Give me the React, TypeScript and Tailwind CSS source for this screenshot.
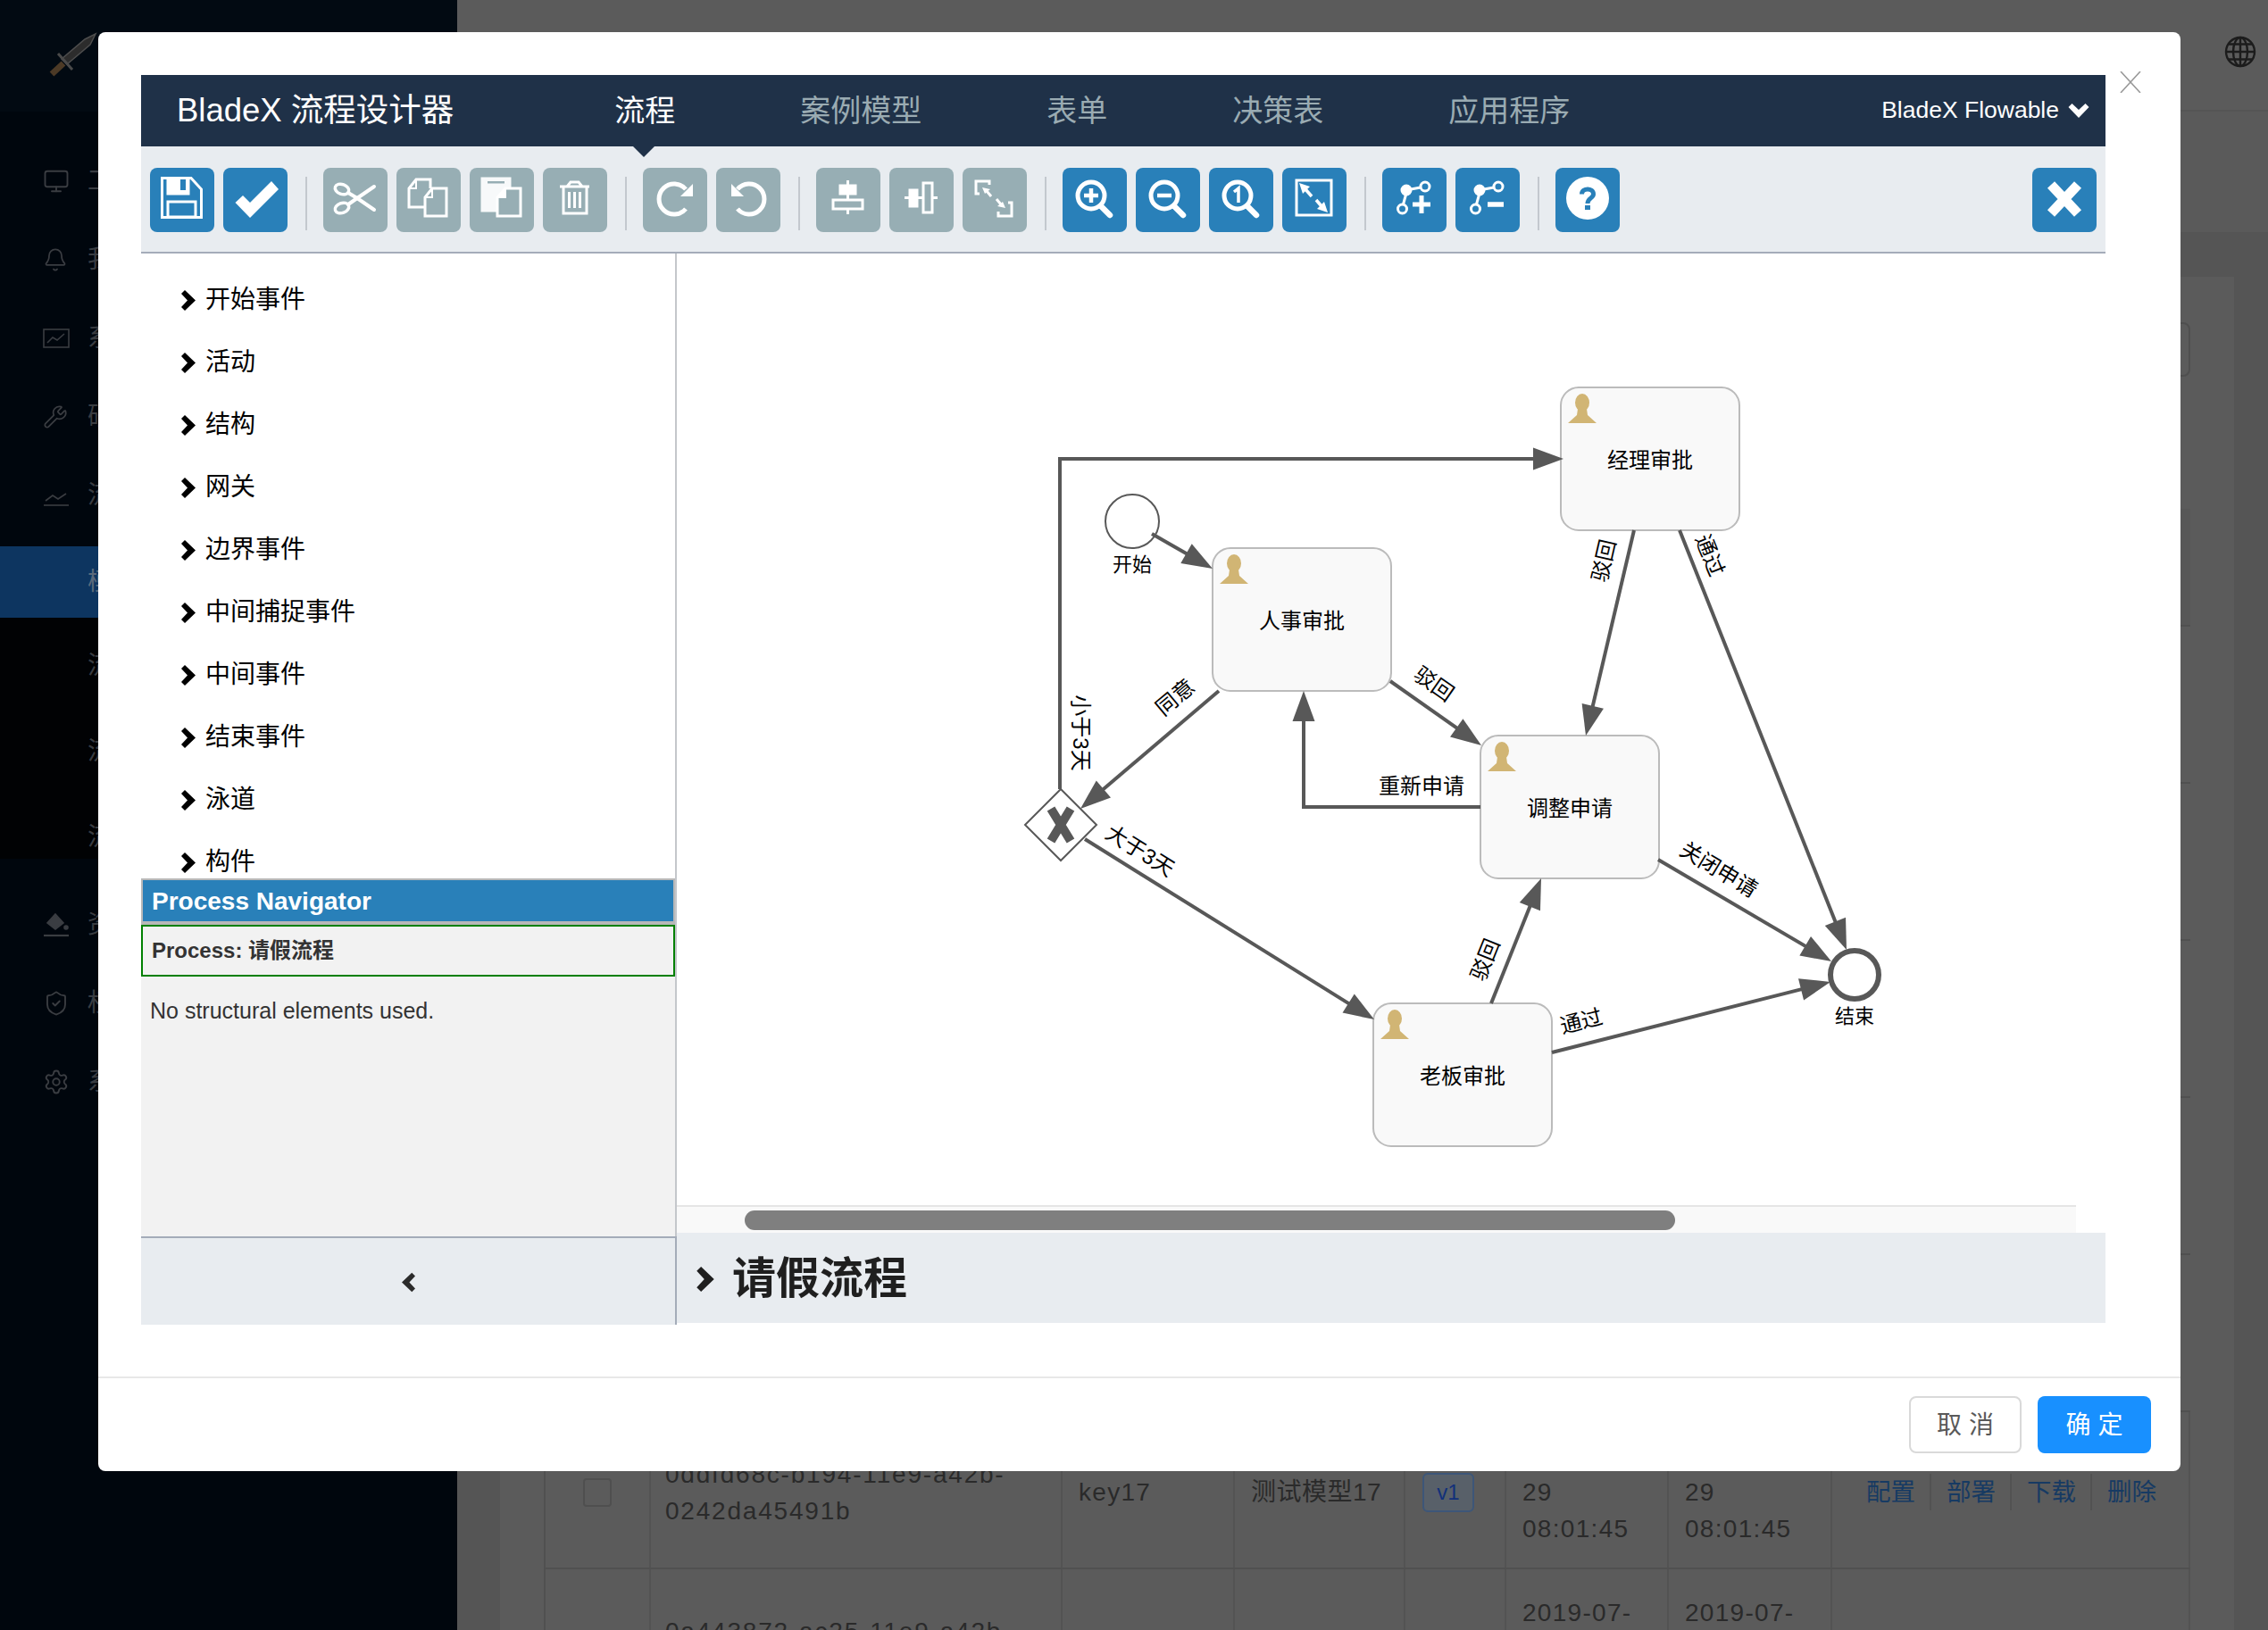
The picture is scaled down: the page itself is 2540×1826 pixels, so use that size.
import React from 'react';
import { Bell, Monitor, Settings, ShieldCheck, Wrench } from 'lucide-react';

const Chevron: React.FC<{ className?: string }> = ({ className }) => (
  <svg viewBox="0 0 16 23" className={className} fill="currentColor">
    <polygon points="0,4 4,0 16,11.5 4,23 0,19 7,11.5" />
  </svg>
);

const ToolBtn: React.FC<{ off?: boolean; children: React.ReactNode }> = ({ off, children }) => (
  <div className={`w-[72px] h-[72px] rounded-[8px] shrink-0 ${off ? 'bg-[#97aeb4]' : 'bg-[#2980b9]'}`}>
    <svg viewBox="0 0 72 72" className="w-full h-full" fill="none" stroke="#fff" strokeWidth="3">
      {children}
    </svg>
  </div>
);

const Sep = () => <div className="w-[2px] h-[60px] mt-[10px] ml-[20px] mr-[18px] bg-[#c3c8ce] shrink-0" />;

const Lens: React.FC<{ children?: React.ReactNode }> = ({ children }) => (
  <>
    <ellipse cx="32" cy="31" rx="15" ry="15" strokeWidth="5" />
    <line x1="43" y1="43" x2="53" y2="53" strokeWidth="6.5" strokeLinecap="round" />
    {children}
  </>
);

const BendBase = () => (
  <>
    <circle cx="48" cy="21" r="5" />
    <circle cx="27" cy="25" r="5" fill="#fff" />
    <circle cx="22.5" cy="46" r="5" />
    <line x1="32" y1="24" x2="43" y2="22" />
    <line x1="26.5" y1="30" x2="23.5" y2="41" />
  </>
);

const SideSvg: React.FC<{ children: React.ReactNode }> = ({ children }) => (
  <svg viewBox="0 0 30 30" width="30" height="30" fill="none" stroke="currentColor" strokeWidth="1.6">
    {children}
  </svg>
);

type Pt = [number, number];

const Edge: React.FC<{ pts: Pt[] }> = ({ pts }) => {
  const tip = pts[pts.length - 1];
  const from = pts[pts.length - 2];
  const dx = tip[0] - from[0];
  const dy = tip[1] - from[1];
  const len = Math.hypot(dx, dy);
  const ux = dx / len;
  const uy = dy / len;
  const bx = tip[0] - ux * 34;
  const by = tip[1] - uy * 34;
  const line = [...pts.slice(0, -1), [tip[0] - ux * 20, tip[1] - uy * 20]].map(p => p.join(',')).join(' ');
  const head = `${tip[0]},${tip[1]} ${bx - uy * 12.5},${by + ux * 12.5} ${bx + uy * 12.5},${by - ux * 12.5}`;
  return (
    <g>
      <polyline points={line} fill="none" stroke="#585858" strokeWidth="4" />
      <polygon points={head} fill="#585858" />
    </g>
  );
};

const Task: React.FC<{ x: number; y: number; label: string }> = ({ x, y, label }) => (
  <g>
    <rect x={x} y={y} width="200" height="160" rx="20" fill="#f9f9f9" stroke="#bbb" strokeWidth="2" />
    <ellipse cx={x + 24} cy={y + 17} rx="8" ry="10" fill="#d1b574" />
    <polygon points={`${x + 19},${y + 24} ${x + 29},${y + 24} ${x + 30},${y + 31} ${x + 40},${y + 40} ${x + 8},${y + 40} ${x + 18},${y + 31}`} fill="#d1b574" />
    <text x={x + 100} y={y + 81} textAnchor="middle" dominantBaseline="central" fontSize="24" fill="#000">{label}</text>
  </g>
);

const Label: React.FC<{ x: number; y: number; angle?: number; size?: number; children: React.ReactNode }> = ({ x, y, angle = 0, size = 24, children }) => (
  <text x={x} y={y} transform={`rotate(${angle} ${x} ${y})`} textAnchor="middle" dominantBaseline="central" fontSize={size} fill="#000">
    {children}
  </text>
);

const sideTop = [
  { icon: <Monitor size={30} strokeWidth={1.5} />, text: '工' },
  { icon: <Bell size={28} strokeWidth={1.5} />, text: '我' },
  {
    icon: (
      <SideSvg>
        <rect x="1" y="5" width="28" height="20" />
        <polyline points="5,20 11,14 16,17 24,10" />
      </SideSvg>
    ),
    text: '系',
  },
  { icon: <Wrench size={28} strokeWidth={1.5} />, text: '研' },
  {
    icon: (
      <SideSvg>
        <line x1="1" y1="26" x2="29" y2="26" />
        <polyline points="3,21 11,15 17,19 26,13" />
      </SideSvg>
    ),
    text: '流',
  },
];

const sideBottom = [
  {
    icon: (
      <SideSvg>
        <polygon points="14,3 23,13 14,20 5,13" fill="currentColor" />
        <circle cx="26" cy="18" r="2" fill="currentColor" />
        <line x1="1" y1="27" x2="29" y2="27" strokeWidth="2.2" />
      </SideSvg>
    ),
    text: '资',
  },
  { icon: <ShieldCheck size={30} strokeWidth={1.5} />, text: '权' },
  { icon: <Settings size={30} strokeWidth={1.5} />, text: '系' },
];

const palette = ['开始事件', '活动', '结构', '网关', '边界事件', '中间捕捉事件', '中间事件', '结束事件', '泳道', '构件'];

const navItems = ['流程', '案例模型', '表单', '决策表', '应用程序'];

const tableCols = 'grid grid-cols-[118px_461px_193px_191px_113px_182px_183px_401px]';

const Cell: React.FC<{ className?: string; children?: React.ReactNode }> = ({ className = '', children }) => (
  <div className={`border-r-2 border-[#535353] flex flex-col justify-center pt-[5px] ${className}`}>{children}</div>
);

const ModelRow: React.FC<{ id: string[]; name?: string; mkey?: string; filled?: boolean }> = ({ id, name, mkey, filled }) => (
  <div className={`${tableCols} h-[176px] border-b-2 border-[#505050] border-l-2 text-[28px] leading-[41px] text-[#2a2a2a]`}>
    <Cell className="items-center">
      <div className="w-[32px] h-[32px] rounded-[4px] border-2 border-[#4f4f4f]" />
    </Cell>
    <Cell className="pl-[16px] tracking-[1.8px]">
      {id.map(line => <span key={line}>{line}</span>)}
    </Cell>
    <Cell className="pl-[18px] tracking-[1.3px]">{mkey}</Cell>
    <Cell className="pl-[18px] tracking-[0.5px]">{name}</Cell>
    <Cell className="pl-[19px]">
      {filled && (
        <div className="w-[58px] h-[44px] rounded-[6px] border-2 border-[#3d5678] bg-[#586069] text-[#12307a] text-[24px] flex items-center justify-center">v1</div>
      )}
    </Cell>
    <Cell className="pl-[18px] tracking-[1.3px]">
      <span>2019-07-</span>
      <span>29</span>
      <span>08:01:45</span>
    </Cell>
    <Cell className="pl-[18px] tracking-[1.3px]">
      <span>2019-07-</span>
      <span>29</span>
      <span>08:01:45</span>
    </Cell>
    <Cell className="pl-[38px]">
      {filled && (
        <div className="flex text-[#163a63] text-[27.5px]">
          {['配置', '部署', '下载', '删除'].map((a, i) => (
            <span key={a} className={i < 3 ? 'pr-[16px] mr-[17px] border-r-2 border-[#525252]' : ''}>{a}</span>
          ))}
        </div>
      )}
    </Cell>
  </div>
);

const Background = () => (
  <div className="flex w-full h-full">
    <aside className="w-[512px] h-full bg-[#00060d] shrink-0 text-[#3a3d42] text-[28px]">
      <div className="h-[125px] bg-[#020a12] pl-[55px] pt-[36px]">
        <svg width="54" height="52" viewBox="0 0 54 52">
          <polygon points="52,2 46,14 20,36 14,30 40,8" fill="#2c2c2c" stroke="#4d4d4d" strokeWidth="1.5" />
          <line x1="10" y1="24" x2="26" y2="42" stroke="#4a4a4a" strokeWidth="3" />
          <line x1="16" y1="35" x2="3" y2="47" stroke="#4c3a26" strokeWidth="7" />
        </svg>
      </div>
      <div className="mt-[34px]">
        {sideTop.map(item => (
          <div key={item.text + 'top'} className="h-[88px] flex items-center">
            <div className="w-[98px] pl-[48px] flex">{item.icon}</div>
            <span>{item.text}</span>
          </div>
        ))}
      </div>
      <div className="mt-[13px] h-[80px] bg-[#0d3560] pl-[98px] flex items-center text-[#5b6a7c]">模</div>
      <div className="h-[270px] bg-[#010204] pl-[98px] pt-[30px] flex flex-col gap-[48px]">
        <div className="h-[48px] flex items-center">流</div>
        <div className="h-[48px] flex items-center">流</div>
        <div className="h-[48px] flex items-center">流</div>
      </div>
      <div className="mt-[30px]">
        {sideBottom.map(item => (
          <div key={item.text + 'bottom'} className="h-[88px] flex items-center">
            <div className="w-[98px] pl-[48px] flex">{item.icon}</div>
            <span>{item.text}</span>
          </div>
        ))}
      </div>
    </aside>
    <main className="flex-1 flex flex-col bg-[#555555] overflow-hidden">
      <div className="h-[125px] shrink-0 bg-[#5b5b5b] border-b-2 border-[#555555] flex items-center justify-end pr-[13px] pb-[8px] text-[#1c1c1c]">
        <svg viewBox="0 0 36 36" width="36" height="36" fill="none" stroke="currentColor" strokeWidth="2.4">
          <circle cx="18" cy="18" r="16" />
          <ellipse cx="18" cy="18" rx="8" ry="16" />
          <path d="M18 2V34M2 18H34M5 9.5H31M5 26.5H31" />
        </svg>
      </div>
      <div className="h-[137px] shrink-0 bg-[#5a5a5a] border-b-2 border-[#555555]" />
      <div className="mt-[48px] ml-[48px] mr-[38px] flex-1 bg-[#5b5b5b] px-[49px] pt-[51px]">
        <div className="flex justify-end">
          <div className="w-[120px] h-[61px] rounded-[8px] border-2 border-[#4f4f4f]" />
        </div>
        <div className="mt-[148px]">
          <div className="h-[132px] bg-[#575757] border-b-2 border-[#505050]" />
          {[0, 1, 2, 3, 4].map(i => (
            <div key={i} className="h-[176px] border-b-2 border-[#505050]" />
          ))}
          <ModelRow id={['0ddfd68c-b194-11e9-a42b-', '0242da45491b']} mkey="key17" name="测试模型17" filled />
          <ModelRow id={['0a443872-ac25-11e9-a42b-', '0242da45491b']} />
        </div>
      </div>
    </main>
  </div>
);

const Diagram = () => (
  <svg viewBox="758 284 1567 1066" width="1567" height="1066" className="block">
    <Task x={1748} y={434} label="经理审批" />
    <Task x={1358} y={614} label="人事审批" />
    <Task x={1658} y={824} label="调整申请" />
    <Task x={1538} y={1124} label="老板审批" />

    <circle cx="1268" cy="584" r="30" fill="#fff" stroke="#585858" strokeWidth="2" />
    <polygon points="1188,884 1228,924 1188,964 1148,924" fill="#fff" stroke="#585858" strokeWidth="2" />
    <path d="M1177 906 L1199 942 M1199 906 L1177 942" stroke="#585858" strokeWidth="10" />

    <Edge pts={[[1187, 884], [1187, 514], [1751, 514]]} />
    <Edge pts={[[1290, 598], [1358, 637]]} />
    <Edge pts={[[1365, 774], [1210, 906]]} />
    <Edge pts={[[1557, 763], [1659, 835]]} />
    <Edge pts={[[1658, 904], [1460, 904], [1460, 774]]} />
    <Edge pts={[[1830, 594], [1776, 824]]} />
    <Edge pts={[[1881, 594], [2068, 1064]]} />
    <Edge pts={[[1857, 963], [2051, 1077]]} />
    <Edge pts={[[1670, 1124], [1726, 984]]} />
    <Edge pts={[[1738, 1179], [2050, 1100]]} />
    <Edge pts={[[1215, 940], [1539, 1142]]} />

    <circle cx="2077" cy="1092" r="27" fill="#fff" stroke="#585858" strokeWidth="6" />

    <Label x={1268} y={632} size={22}>开始</Label>
    <Label x={2077} y={1138} size={22}>结束</Label>
    <Label x={1210} y={821} angle={90}>小于3天</Label>
    <Label x={1316} y={781} angle={-40}>同意</Label>
    <Label x={1606} y={766} angle={35}>驳回</Label>
    <Label x={1796} y={628} angle={-77}>驳回</Label>
    <Label x={1915} y={622} angle={68}>通过</Label>
    <Label x={1592} y={880}>重新申请</Label>
    <Label x={1277} y={953} angle={32}>大于3天</Label>
    <Label x={1925} y={974} angle={31}>关闭申请</Label>
    <Label x={1663} y={1075} angle={-68}>驳回</Label>
    <Label x={1771} y={1144} angle={-14}>通过</Label>
  </svg>
);

const Toolbar = () => (
  <div className="h-[120px] shrink-0 bg-[#e8ecf0] border-b-2 border-[#a4acb9] pl-[10px] pr-[10px] pt-[24px] flex items-start">
    <div className="flex gap-[10px]">
      <ToolBtn>
        <path d="M13.5 11.5H46L57.5 24V55.5H13.5Z" />
        <path d="M20 12V29H43V12Z" fill="#fff" />
        <rect x="34" y="13" width="6" height="12" fill="#2980b9" stroke="none" />
        <rect x="20" y="38" width="31" height="17" />
      </ToolBtn>
      <ToolBtn>
        <polygon points="13.5,39 30,56 62,24 54,15 30,39 22,31" fill="#fff" stroke="none" />
      </ToolBtn>
    </div>
    <Sep />
    <div className="flex gap-[10px]">
      <ToolBtn off>
        <ellipse cx="21" cy="24" rx="8" ry="5.5" transform="rotate(20 21 24)" strokeWidth="3.5" />
        <ellipse cx="21" cy="45" rx="8" ry="5.5" transform="rotate(-20 21 45)" strokeWidth="3.5" />
        <path d="M28 28L38 34L57 47M28 41L38 34L57 21" strokeWidth="4" strokeLinecap="round" />
      </ToolBtn>
      <ToolBtn off>
        <path d="M32 44H14V23L22 13H38V23" />
        <path d="M22 13V23H14" strokeWidth="2" />
        <path d="M32 54V33L40 23H56V54Z" />
        <path d="M40 23V33H32" strokeWidth="2" />
      </ToolBtn>
      <ToolBtn off>
        <path d="M14 12H45V24L31 38V48H14Z" fill="#f7f9fa" stroke="#f7f9fa" />
        <rect x="20" y="15" width="19" height="2.5" fill="#97aeb4" stroke="none" />
        <path d="M31 54V33L40 23H57V54Z" fill="#97aeb4" />
        <path d="M40 23V33H31" fill="#fff" strokeWidth="2" />
      </ToolBtn>
      <ToolBtn off>
        <path d="M19 21H52M27 21L31 16H40L44 21" />
        <path d="M23 21V51H49V21" />
        <path d="M29.5 27V45M35.5 27V45M41.5 27V45" />
      </ToolBtn>
    </div>
    <Sep />
    <div className="flex gap-[10px]">
      <ToolBtn off>
        <path d="M48 46A17 17 0 1 1 48 24" strokeWidth="5" />
        <polygon points="56,18 56,32 42,32" fill="#fff" stroke="none" />
      </ToolBtn>
      <ToolBtn off>
        <path d="M24 46A17 17 0 1 0 24 24" strokeWidth="5" />
        <polygon points="17,18 17,32 31,32" fill="#fff" stroke="none" />
      </ToolBtn>
    </div>
    <Sep />
    <div className="flex gap-[10px]">
      <ToolBtn off>
        <line x1="35.5" y1="14" x2="35.5" y2="52" />
        <rect x="27" y="20" width="17" height="9" fill="#fff" />
        <rect x="19" y="36" width="33" height="10" fill="#97aeb4" />
      </ToolBtn>
      <ToolBtn off>
        <line x1="17" y1="33.5" x2="54" y2="33.5" />
        <rect x="23" y="25" width="8" height="18" fill="#fff" />
        <rect x="38" y="17" width="10" height="33" fill="#97aeb4" />
      </ToolBtn>
      <ToolBtn off>
        <path d="M19 29H15V15H30V19" />
        <path d="M51 39H55V54H40V49" />
        <polygon points="22,22 31,24 25,29" fill="#fff" stroke="none" />
        <line x1="27" y1="26" x2="32" y2="32" />
        <polygon points="48,45 39,43 45,38" fill="#fff" stroke="none" />
        <line x1="43" y1="41" x2="38" y2="35" />
      </ToolBtn>
    </div>
    <Sep />
    <div className="flex gap-[10px]">
      <ToolBtn>
        <Lens>
          <path d="M32 23V39M24 31H40" strokeWidth="4.5" />
        </Lens>
      </ToolBtn>
      <ToolBtn>
        <Lens>
          <path d="M24 31H40" strokeWidth="4.5" />
        </Lens>
      </ToolBtn>
      <ToolBtn>
        <Lens>
          <path d="M28 27L33 23V39" strokeWidth="3.5" />
        </Lens>
      </ToolBtn>
      <ToolBtn>
        <rect x="16" y="14" width="39" height="39" />
        <polygon points="19,17 31,21 23,29" fill="#fff" stroke="none" />
        <line x1="26" y1="24" x2="33" y2="32" strokeWidth="3.5" />
        <polygon points="51,50 39,46 47,38" fill="#fff" stroke="none" />
        <line x1="44" y1="43" x2="38" y2="36" strokeWidth="3.5" />
      </ToolBtn>
    </div>
    <Sep />
    <div className="flex gap-[10px]">
      <ToolBtn>
        <BendBase />
        <path d="M44 31V51M34 41H54" strokeWidth="5" />
      </ToolBtn>
      <ToolBtn>
        <BendBase />
        <path d="M36 41H54" strokeWidth="5.5" />
      </ToolBtn>
    </div>
    <Sep />
    <ToolBtn>
      <circle cx="36" cy="34" r="24" fill="#fff" stroke="none" />
      <path d="M29.5 29.5C29.5 22 42.5 22 42.5 29.5C42.5 34 36 34 36 40" stroke="#2980b9" strokeWidth="5" />
      <rect x="33" y="42" width="6" height="5" fill="#2980b9" stroke="none" />
    </ToolBtn>
    <div className="ml-auto">
      <ToolBtn>
        <path d="M21 19L51 51M51 19L21 51" strokeWidth="11" />
      </ToolBtn>
    </div>
  </div>
);

const App: React.FC = () => {
  return (
    <div className="relative w-[2540px] h-[1826px] overflow-hidden font-['Liberation_Sans','Noto_Sans_CJK_SC',sans-serif]">
      <Background />

      <div className="absolute left-[110px] top-[36px] w-[2332px] h-[1612px] bg-white rounded-[8px] flex flex-col">
        <svg viewBox="0 0 24 24" className="absolute left-[2264px] top-[44px] w-[24px] h-[24px]" stroke="#999" strokeWidth="1.6" fill="none">
          <path d="M1 0L23 24M23 0L1 24" />
        </svg>

        <div className="ml-[48px] mr-[84px] mt-[48px] flex flex-col">
          <header className="h-[80px] shrink-0 bg-[#1f3148] flex items-center pl-[40px] pr-[22px] text-white">
            <div className="text-[36.5px] whitespace-nowrap">BladeX 流程设计器</div>
            <nav className="flex items-stretch self-stretch gap-[140px] ml-[180px] text-[34px] text-[#9aabb2]">
              {navItems.map((item, i) => (
                <div key={item} className={`relative flex items-center ${i === 0 ? 'text-white' : ''}`}>
                  {item}
                  {i === 0 && (
                    <svg viewBox="0 0 24 12" className="absolute top-full left-[21px] w-[24px] h-[12px] z-10" fill="#1f3148">
                      <polygon points="0,0 24,0 12,12" />
                    </svg>
                  )}
                </div>
              ))}
            </nav>
            <div className="ml-auto flex items-center gap-[14px] text-[26.5px]">
              BladeX Flowable
              <Chevron className="w-[16px] h-[24px] rotate-90" />
            </div>
          </header>

          <Toolbar />

          <div className="flex h-[1200px]">
            <div className="w-[600px] shrink-0 border-r-2 border-[#c4c7cb] flex flex-col">
              <div className="h-[700px] shrink-0 overflow-hidden pt-[17px] pl-[45px]">
                {palette.map(name => (
                  <div key={name} className="h-[70px] flex items-center gap-[11px] text-[28px] text-black">
                    <Chevron className="w-[16px] h-[23px] shrink-0" />
                    <span>{name}</span>
                  </div>
                ))}
              </div>
              <div className="flex-1 bg-[#f2f2f2] flex flex-col text-[#333]">
                <div className="h-[52px] shrink-0 bg-[#2980b9] border-2 border-b-4 border-[#b8b8b8] pl-[10px] pt-[2px] flex items-center text-[28px] font-bold text-white">
                  Process Navigator
                </div>
                <div className="h-[58px] shrink-0 border-2 border-[#008000] pl-[10px] flex items-center text-[24px] font-bold">
                  Process: 请假流程
                </div>
                <div className="pl-[10px] pt-[22px] text-[25px] leading-[32px]">No structural elements used.</div>
              </div>
              <div className="h-[99px] shrink-0 -mr-[2px] bg-[#e8ecf0] border-t-2 border-r-2 border-[#a4acb9] flex items-center justify-center text-[#2b2b2b] pt-[2px]">
                <Chevron className="w-[15px] h-[23px] rotate-180" />
              </div>
            </div>

            <div className="flex-1 flex flex-col">
              <div className="mr-[33px]">
                <Diagram />
                <div className="h-[31px] bg-[#f9f9f9] border-t-2 border-[#e5e5e5] pl-[76px] pt-[4px]">
                  <div className="w-[1042px] h-[22px] rounded-full bg-[#7f7f7f]" />
                </div>
              </div>
              <div className="h-[101px] bg-[#e8ecf0] pl-[22px] pt-[2px] flex items-center gap-[20px] text-[#1f1f1f]">
                <Chevron className="w-[20px] h-[28px]" />
                <span className="text-[49px] font-bold leading-none">请假流程</span>
              </div>
            </div>
          </div>
        </div>

        <div className="mt-[58px] flex-1 border-t-2 border-[#e8e8e8] flex justify-end items-start gap-[18px] pr-[33px] pt-[20px] text-[28px]">
          <button className="w-[126px] h-[64px] rounded-[8px] border-2 border-[#d9d9d9] bg-white text-[#595959] pt-[2px]">取 消</button>
          <button className="w-[127px] h-[64px] rounded-[8px] bg-[#1890ff] text-white pt-[2px]">确 定</button>
        </div>
      </div>
    </div>
  );
};

export default App;
